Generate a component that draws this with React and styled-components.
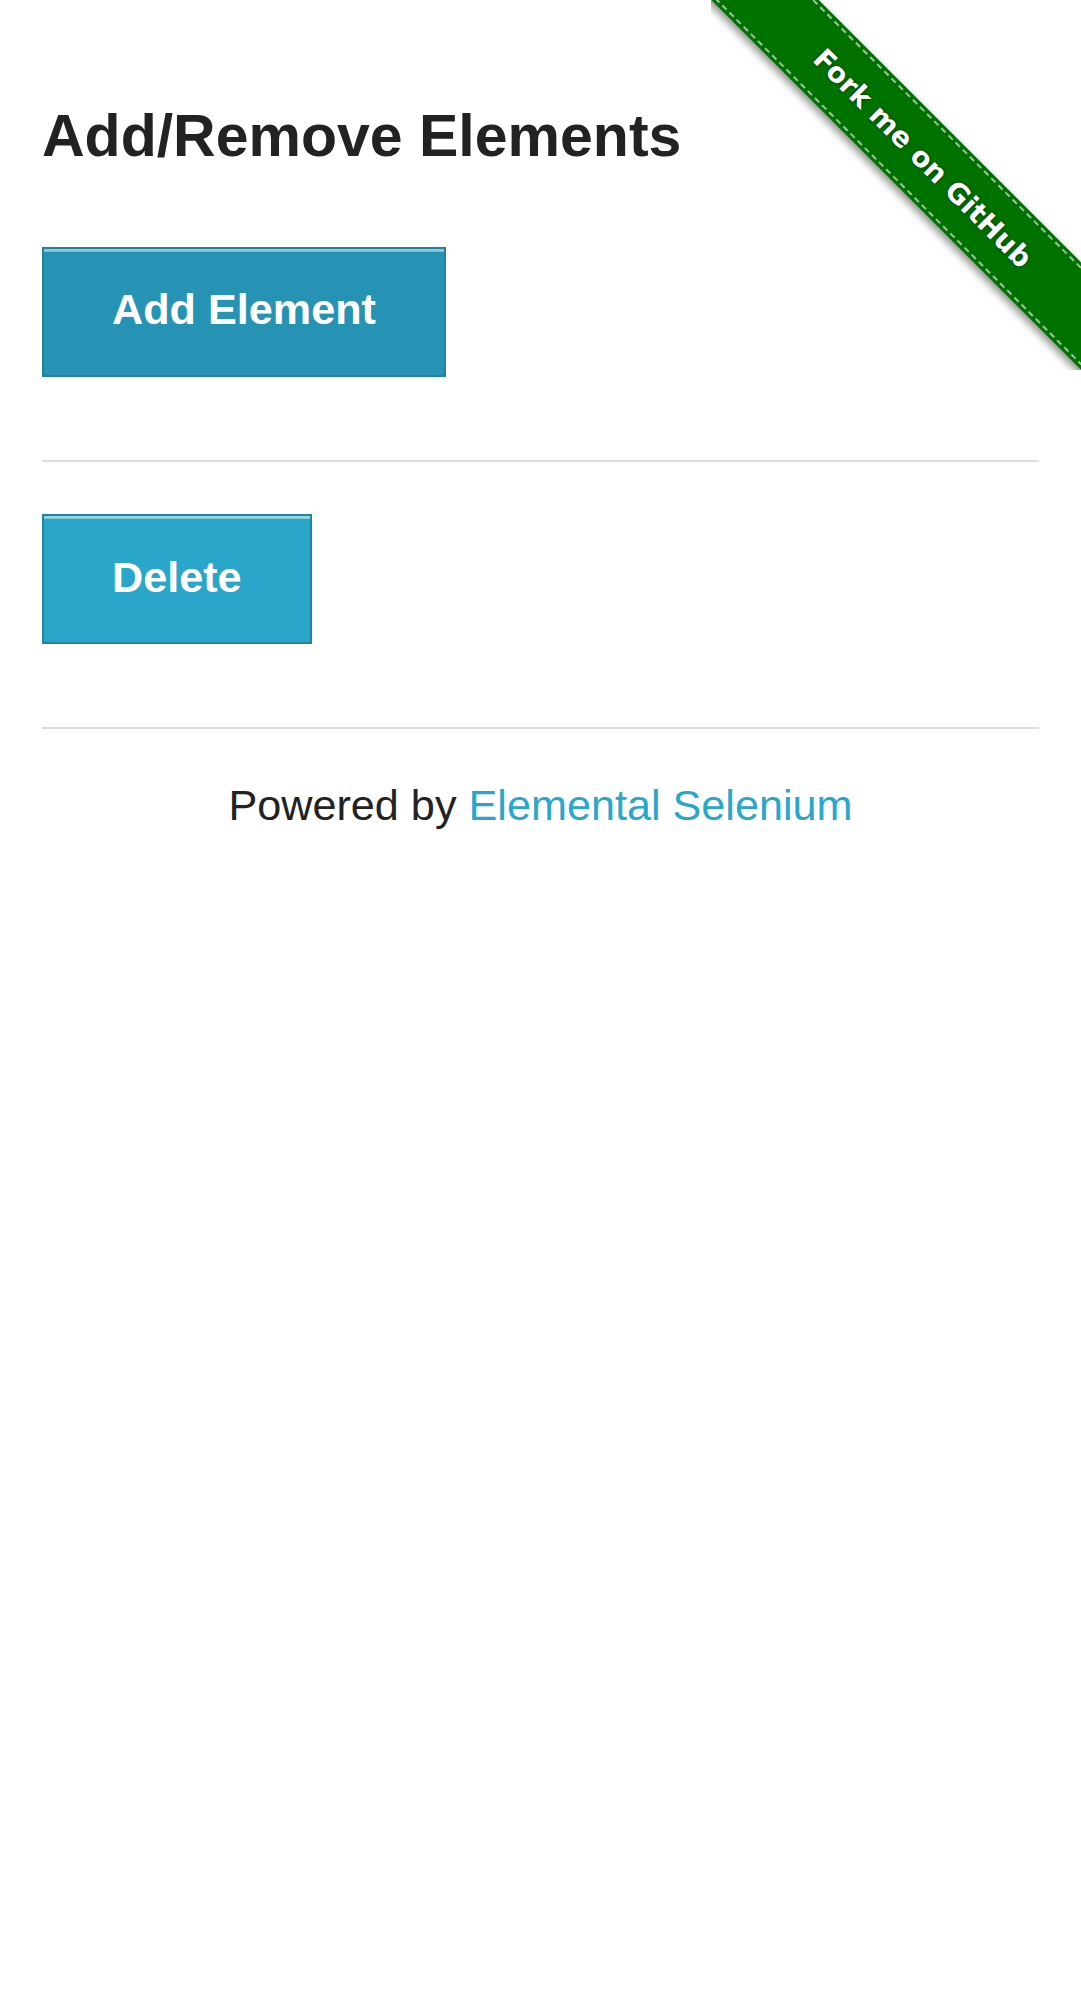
import { createGlobalStyle, styled } from "styled-components";

const GlobalStyle = createGlobalStyle`
  html, body {
    margin: 0;
    padding: 0;
    background: #ffffff;
  }
  body {
    font-family: "Liberation Sans", Arial, Helvetica, sans-serif;
    color: #222222;
  }
`;

const Page = styled.div`
  position: relative;
  min-height: 1999px;
  padding: 0 42px;
  box-sizing: border-box;
  overflow: hidden;
`;

const Title = styled.h3`
  margin: 0;
  padding-top: 107px;
  font-size: 59px;
  line-height: 1;
  font-weight: 700;
  color: #222222;
`;

const ButtonRow = styled.div`
  display: flex;
  margin-top: ${(p) => p.$top || 0}px;
`;

const Button = styled.button`
  display: block;
  margin: 0;
  padding: 39.5px 68px 43.5px;
  font-family: "Liberation Sans", Arial, Helvetica, sans-serif;
  font-size: 43.2px;
  line-height: 1;
  font-weight: 700;
  color: #ffffff;
  background: ${(p) => (p.$dark ? "#2693b4" : "#2ba6cb")};
  border: 2.7px solid ${(p) => (p.$dark ? "#1f82a0" : "#2284a1")};
  box-shadow: inset 0 2.7px 0 rgba(255, 255, 255, 0.5);
  cursor: pointer;
`;

const Rule = styled.hr`
  height: 0;
  margin: 83px 0 ${(p) => p.$bottom}px;
  border: 0;
  border-top: 2.7px solid #dddddd;
`;

const Footer = styled.div`
  text-align: center;
  font-size: 43.2px;
  line-height: 1;
  color: #222222;
  a {
    color: #2ba6cb;
    text-decoration: none;
  }
`;

const Ribbon = styled.a`
  position: absolute;
  top: 0;
  right: 0;
  width: 370px;
  height: 370px;
  overflow: hidden;
  text-decoration: none;
`;

const Band = styled.span`
  position: absolute;
  left: -68px;
  top: 120px;
  width: 560px;
  height: 76px;
  display: flex;
  align-items: center;
  justify-content: center;
  background: #007200;
  transform: rotate(45deg);
  box-shadow: 0 4px 8px rgba(0, 0, 0, 0.45);
  font-family: "DejaVu Sans", "Open Sans", sans-serif;
  font-size: 28px;
  font-weight: 700;
  color: #ffffff;
  text-shadow: 0 0 3px rgba(0, 0, 0, 0.7);
  &::before {
    content: "";
    position: absolute;
    left: 0;
    right: 0;
    top: 3px;
    bottom: 3px;
    border-top: 2px dashed rgba(255, 255, 255, 0.6);
    border-bottom: 2px dashed rgba(255, 255, 255, 0.6);
  }
`;

const App = () => {
  return (
    <>
      <GlobalStyle />
      <Page>
        <Title>Add/Remove Elements</Title>
        <ButtonRow $top={80.5}>
          <Button $dark>Add Element</Button>
        </ButtonRow>
        <Rule $bottom={52.3} />
        <ButtonRow>
          <Button>Delete</Button>
        </ButtonRow>
        <Rule $bottom={55} />
        <Footer>
          Powered by <a href="#">Elemental Selenium</a>
        </Footer>
        <Ribbon href="#">
          <Band>Fork me on GitHub</Band>
        </Ribbon>
      </Page>
    </>
  );
};

export default App;
